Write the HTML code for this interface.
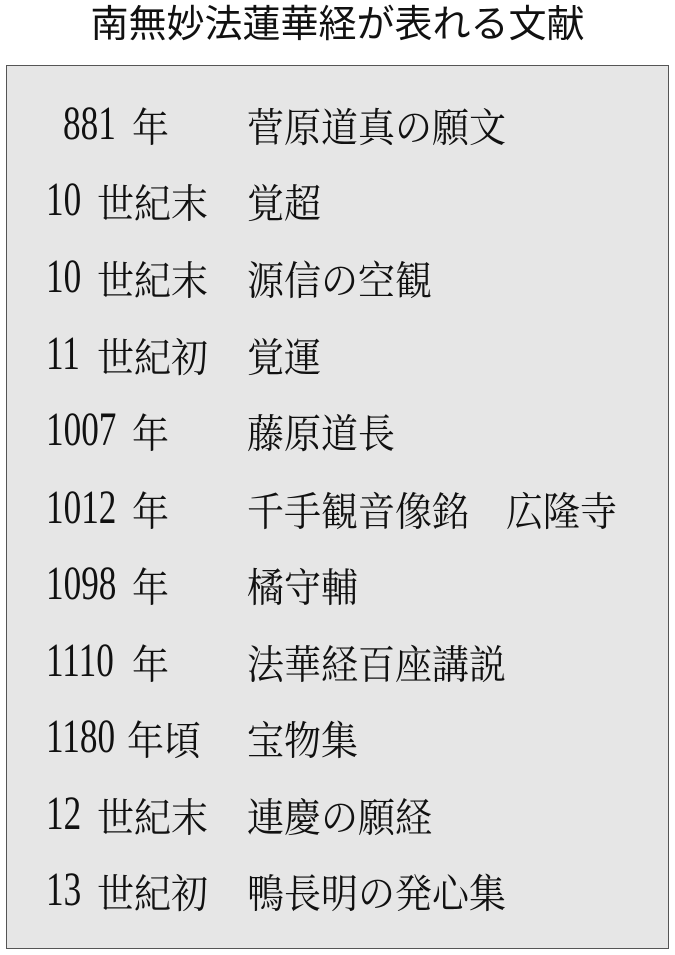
<!DOCTYPE html>
<html><head><meta charset="utf-8"><style>
body{margin:0;width:675px;height:955px;background:#fff;position:relative;overflow:hidden}
.t{position:absolute;top:1px;left:0;width:675px;text-align:center;font:38px/48px "Liberation Sans","Noto Sans CJK JP",sans-serif;color:#111}
.box{position:absolute;left:6px;top:65px;width:661px;height:882px;background:#e6e6e6;border:1.5px solid #555}
.r{position:absolute;left:0;height:48px;line-height:48px;font-family:"Noto Serif CJK SC","Noto Serif CJK JP","Liberation Serif",serif;color:#111;transform:scaleY(1.08);transform-origin:center}
.r span{position:absolute;top:0;white-space:nowrap}
.n{font-family:"Liberation Serif","DejaVu Serif",serif;font-size:44px;transform:scaleX(0.8);transform-origin:left center;display:inline-block}
.k{font-size:37px}
</style></head><body>
<div class="t">南無妙法蓮華経が表れる文献</div>
<div class="box"></div>
<div class="r" style="top:100px"><span class="n" style="left:63px">881</span><span class="k" style="left:132px">年</span><span class="k" style="left:247px">菅原道真の願文</span></div>
<div class="r" style="top:176px"><span class="n" style="left:46px">10</span><span class="k" style="left:97px">世紀末</span><span class="k" style="left:247px">覚超</span></div>
<div class="r" style="top:253px"><span class="n" style="left:46px">10</span><span class="k" style="left:97px">世紀末</span><span class="k" style="left:247px">源信の空観</span></div>
<div class="r" style="top:330px"><span class="n" style="left:46px">11</span><span class="k" style="left:97px">世紀初</span><span class="k" style="left:247px">覚運</span></div>
<div class="r" style="top:406px"><span class="n" style="left:46px">1007</span><span class="k" style="left:132px">年</span><span class="k" style="left:247px">藤原道長</span></div>
<div class="r" style="top:484px"><span class="n" style="left:46px">1012</span><span class="k" style="left:132px">年</span><span class="k" style="left:247px">千手観音像銘　広隆寺</span></div>
<div class="r" style="top:560px"><span class="n" style="left:46px">1098</span><span class="k" style="left:132px">年</span><span class="k" style="left:247px">橘守輔</span></div>
<div class="r" style="top:637px"><span class="n" style="left:46px">1110</span><span class="k" style="left:132px">年</span><span class="k" style="left:247px">法華経百座講説</span></div>
<div class="r" style="top:713px"><span class="n" style="left:46px">1180</span><span class="k" style="left:127px">年頃</span><span class="k" style="left:247px">宝物集</span></div>
<div class="r" style="top:790px"><span class="n" style="left:46px">12</span><span class="k" style="left:97px">世紀末</span><span class="k" style="left:247px">連慶の願経</span></div>
<div class="r" style="top:866px"><span class="n" style="left:46px">13</span><span class="k" style="left:97px">世紀初</span><span class="k" style="left:247px">鴨長明の発心集</span></div>
</body></html>
